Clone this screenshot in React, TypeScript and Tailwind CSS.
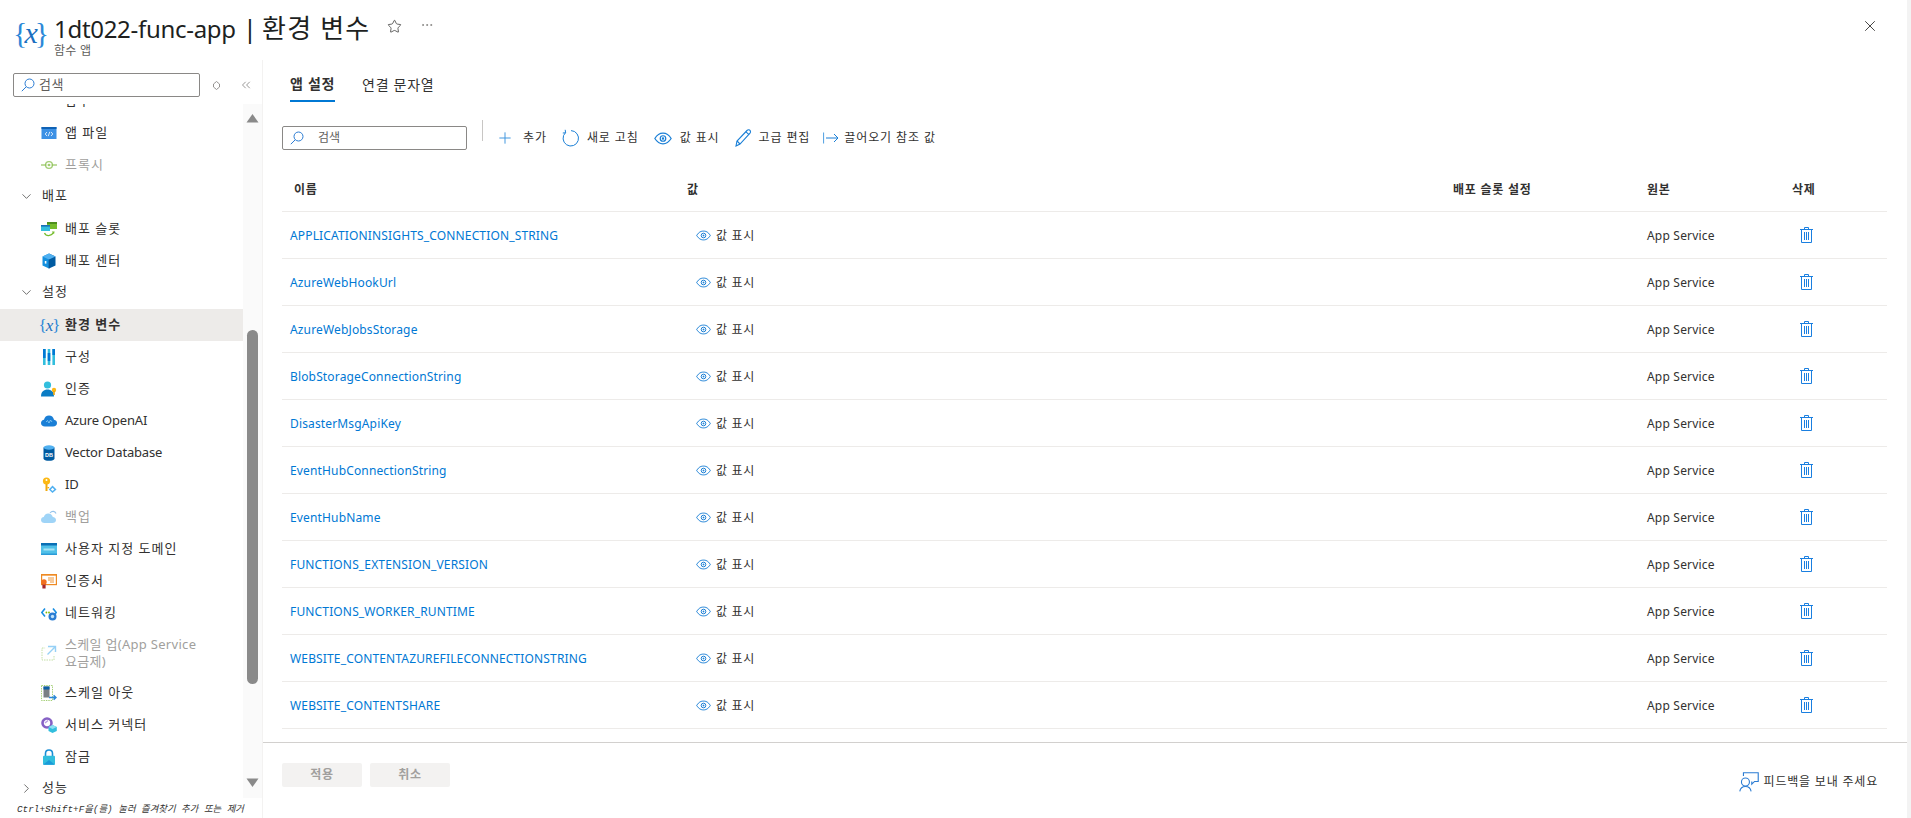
import React from 'react';
import { Plus, Star, X, ChevronDown, ChevronRight, ChevronsLeft, MoreHorizontal } from 'lucide-react';

const FONT = 'font-["Noto_Sans","Noto_Sans_CJK_KR",sans-serif]';

const SearchIcon = () => (
  <svg width="14" height="14" viewBox="0 0 14 14" fill="none" stroke="#2b7cd3" strokeWidth="1">
    <circle cx="8.5" cy="5.5" r="4.5" />
    <path d="M5.2 8.8 L0.8 13.2" />
  </svg>
);

const EyeIcon = ({ size = 15 }: { size?: number }) => (
  <svg width={size} height={Math.round(size * 0.7)} viewBox="0 0 15 10" fill="none" stroke="#1a7fd6" strokeWidth="1">
    <path d="M0.7 5 C3 1.2 5.2 0.6 7.5 0.6 C9.8 0.6 12 1.2 14.3 5 C12 8.6 9.8 9.4 7.5 9.4 C5.2 9.4 3 8.6 0.7 5 Z" />
    <circle cx="7.5" cy="5" r="2.3" />
    <circle cx="7.5" cy="5" r="0.5" fill="#1a7fd6" />
  </svg>
);

const TrashIcon = () => (
  <svg width="13" height="16" viewBox="0 0 13 16" fill="none" stroke="#1a7fe0" strokeWidth="1">
    <path d="M0 2.5 H13 M4.5 2.5 V0.5 H8.5 V2.5" />
    <path d="M1.5 2.5 V15.5 H11.5 V2.5" />
    <path d="M4.5 5 V13 M6.5 5 V13 M8.5 5 V13" />
  </svg>
);

const RefreshIcon = () => (
  <svg width="17" height="18" viewBox="0 0 17 18" fill="none" stroke="#1a7fd6" strokeWidth="1">
    <path d="M9 1.6 A7.7 7.7 0 1 1 3.6 3.6" />
    <path d="M3.2 0.8 L3.6 3.8 L0.8 4" />
  </svg>
);

const PencilIcon = () => (
  <svg width="17" height="18" viewBox="0 0 17 18" fill="none" stroke="#1a7fd6" strokeWidth="1.1">
    <path d="M1 17 L2 12 L12 1.5 C13 0.5 14.5 0.6 15.2 1.6 C15.8 2.6 15.6 3.5 15 4.2 L5 15 Z" />
    <path d="M2 12 L5 15 M11 2.8 L14 5.6" />
  </svg>
);

const ReferenceIcon = () => (
  <svg width="16" height="12" viewBox="0 0 16 12" fill="none" stroke="#1a7fd6" strokeWidth="1">
    <path d="M0.5 0.5 V11.5" stroke="#5ea7e3" strokeWidth="1.2" />
    <path d="M3 6 H15 M11 2 L15 6 L11 10" />
  </svg>
);

const FeedbackIcon = () => (
  <svg width="20" height="20" viewBox="0 0 18 18" fill="none" stroke="#2b7cd3" strokeWidth="1">
    <circle cx="5.8" cy="9" r="3.6" />
    <path d="M0.7 17.5 C1.2 14.5 3 13 5.8 13 C8.6 13 10.4 14.5 10.9 17.5" />
    <path d="M4 3.5 V0.7 H17.3 V8.5 H14 L11.5 11 V8.5" />
  </svg>
);

const FuncVar = ({ small }: { small?: boolean }) => (
  <span
    className={`font-["Liberation_Serif",serif] font-normal text-[#2b88d8] leading-none whitespace-nowrap ${
      small ? 'text-[17px] tracking-[-1px]' : 'text-[30px] tracking-[-3px] -ml-[4px]'
    }`}
  >
    {'{'}
    <span className="italic text-[#1a6fc0]">x</span>
    {'}'}
  </span>
);

const box = (children: React.ReactNode, faded?: boolean) => (
  <svg width="16" height="16" viewBox="0 0 16 16" className={faded ? 'opacity-45' : ''}>
    {children}
  </svg>
);

const icons: Record<string, () => React.ReactNode> = {
  bulb: () => box(<path d="M5 0 H11 V4 C11 6 10 7 8 7.5 C6 7 5 6 5 4 Z" fill="#fcb814" />),
  file: () =>
    box(
      <>
        <rect x="0.5" y="2" width="15" height="12" fill="#3c91e5" />
        <rect x="0.5" y="2" width="15" height="2" fill="#0f62b5" />
        <path d="M6 7 L4.2 9 L6 11 M10 7 L11.8 9 L10 11 M8.8 6.8 L7.2 11.2" stroke="#fff" strokeWidth="0.8" fill="none" />
      </>,
    ),
  proxy: () =>
    box(
      <>
        <path d="M0 8 H16" stroke="#8cc152" strokeWidth="1.4" opacity="0.8" />
        <circle cx="8" cy="8" r="3.4" fill="#fff" stroke="#8cc152" strokeWidth="1.4" opacity="0.8" />
        <circle cx="8" cy="8" r="1.3" fill="#8cc152" opacity="0.8" />
      </>,
    ),
  slot: () =>
    box(
      <>
        <rect x="6" y="1" width="10" height="7" fill="#76bc2d" />
        <rect x="6" y="1" width="10" height="2" fill="#4f8f1e" />
        <rect x="0" y="4" width="9" height="6" fill="#32bedd" />
        <rect x="0" y="4" width="9" height="1.6" fill="#1a6fb5" />
        <path d="M3.5 12 C5 15.5 10 15.5 12.5 11.5" stroke="#76bc2d" strokeWidth="1.3" fill="none" />
        <path d="M10.8 10.4 L13.6 10.6 L13 13.2" fill="#76bc2d" />
      </>,
    ),
  center: () =>
    box(
      <>
        <path d="M8 0.5 L14.5 3.5 V12.5 L8 15.5 Z" fill="#005ba1" />
        <path d="M8 0.5 L1.5 3.5 V12.5 L8 15.5 Z" fill="#1490df" />
        <path d="M1.5 3.5 L8 6.5 L14.5 3.5 L8 0.5 Z" fill="#50b0f0" />
        <path d="M8 6.5 V15.5" stroke="#0a4f8a" strokeWidth="0.6" />
        <rect x="3.8" y="8" width="1.6" height="2.6" fill="#fff" />
      </>,
    ),
  config: () =>
    box(
      <>
        <rect x="2" y="0" width="2.6" height="16" fill="#32bedd" />
        <rect x="6.7" y="0" width="2.6" height="16" fill="#32bedd" />
        <rect x="11.4" y="0" width="2.6" height="16" fill="#32bedd" />
        <rect x="2" y="0" width="2.6" height="9" fill="#0078d4" />
        <rect x="6.7" y="4" width="2.6" height="8" fill="#0078d4" />
        <rect x="11.4" y="0" width="2.6" height="6" fill="#0078d4" />
      </>,
    ),
  auth: () =>
    box(
      <>
        <circle cx="6.5" cy="4" r="3.6" fill="#32bedd" />
        <path d="M0 15.5 C0 10.5 3 8.5 6.5 8.5 C10 8.5 13 10.5 13 15.5 Z" fill="#0a7cc4" />
        <circle cx="13" cy="9" r="2.2" fill="#fcb814" />
        <path d="M12.2 10 H13.8 V14 H12.2 Z" fill="#e8a50c" />
      </>,
    ),
  openai: () =>
    box(
      <>
        <path d="M4 13.5 C1.5 13.5 0 12 0 10 C0 8 1.5 6.7 3 6.7 C3.5 4 5.5 2.5 8 2.5 C10.5 2.5 12.4 4 13 6.7 C14.8 7 16 8.3 16 10 C16 12 14.5 13.5 12 13.5 Z" fill="#1a7fd6" />
        <path d="M5 9 L6.5 7.5 L8 10 L9.5 7 L11 9" stroke="#9fd8f7" strokeWidth="0.7" fill="none" />
      </>,
    ),
  db: () =>
    box(
      <>
        <path d="M2.5 2.5 V13.5 C2.5 15 5 15.8 8 15.8 C11 15.8 13.5 15 13.5 13.5 V2.5 Z" fill="#005ba1" />
        <ellipse cx="8" cy="2.5" rx="5.5" ry="2.2" fill="#50b0f0" />
        <text x="8" y="11.5" textAnchor="middle" fontSize="5.5" fontWeight="700" letterSpacing="0" fill="#fff" fontFamily="Liberation Sans">
          DB
        </text>
      </>,
    ),
  id: () =>
    box(
      <>
        <circle cx="5.5" cy="4" r="3.6" fill="#fcb814" />
        <circle cx="5.5" cy="3" r="1" fill="#fff" />
        <rect x="4.5" y="7" width="2" height="7" fill="#f2a90d" />
        <rect x="6.5" y="10" width="1.6" height="1.3" fill="#f2a90d" />
        <path d="M11.5 8.5 L15.5 12.5 L11.5 16 L7.8 12.5 Z" fill="#50b0f0" />
        <path d="M11.5 10.8 L13.3 12.5 L11.5 14 L9.8 12.5 Z" fill="#fff" />
      </>,
    ),
  backup: () =>
    box(
      <>
        <path d="M3.5 14 C1.5 14 0 12.7 0 11 C0 9.3 1.4 8.2 2.8 8.1 C3.2 6 5 4.5 7.2 4.5 C9.5 4.5 11.4 6 11.8 8.1 C13.6 8.3 15 9.4 15 11 C15 12.7 13.5 14 11.5 14 Z" fill="#50b0f0" opacity="0.55" />
        <path d="M9 4 C11 1.5 14 2 15 4.5" stroke="#2b88d8" strokeWidth="1.1" fill="none" opacity="0.5" />
      </>,
    ),
  domain: () =>
    box(
      <>
        <rect x="0" y="2" width="16" height="12" fill="#50c0e8" />
        <rect x="0" y="2" width="16" height="2.5" fill="#0a6fb5" />
        <rect x="2.5" y="7.5" width="11" height="2" fill="#a5e3f5" />
        <rect x="0" y="12.5" width="16" height="1.5" fill="#2b9bd8" />
      </>,
    ),
  cert: () =>
    box(
      <>
        <rect x="0.6" y="1.6" width="14.8" height="10" fill="#fff" stroke="#ee8a23" strokeWidth="1.2" />
        <rect x="0" y="1" width="16" height="1.6" fill="#ee8a23" />
        <path d="M7 5 H13 M7 7 H13 M9 9 H13" stroke="#ee8a23" strokeWidth="0.9" />
        <rect x="1.4" y="10" width="3.2" height="5.5" fill="#a4262c" />
        <circle cx="3" cy="9" r="2.7" fill="#f2701f" />
      </>,
    ),
  network: () =>
    box(
      <>
        <path d="M4 3.5 L0.8 7.5 L4 11.5" stroke="#1a8fe3" strokeWidth="1.6" fill="none" />
        <path d="M12 3.5 L15.2 7.5 L14 9" stroke="#1a8fe3" strokeWidth="1.6" fill="none" />
        <circle cx="5.4" cy="7.5" r="0.9" fill="#7fba00" />
        <circle cx="8" cy="7.5" r="0.9" fill="#7fba00" />
        <circle cx="11.5" cy="11.5" r="4" fill="#2b7cd3" />
        <circle cx="11.5" cy="11.5" r="1.7" fill="#bfe2fa" />
      </>,
    ),
  scaleUp: () =>
    box(
      <>
        <rect x="1" y="3" width="12" height="12" fill="#fff" stroke="#8cc152" strokeWidth="1" strokeDasharray="1.5 1" opacity="0.5" />
        <rect x="4" y="0.5" width="11" height="10" fill="#fff" opacity="0.9" />
        <path d="M9 1.5 H14.5 V7 M14 2 L6.5 9.5 M11.5 1.5 H7" stroke="#50b0f0" strokeWidth="1.4" fill="none" opacity="0.6" />
      </>,
    ),
  scaleOut: () =>
    box(
      <>
        <rect x="0.5" y="0.5" width="11" height="15" fill="#fff" stroke="#8cc152" strokeWidth="0.8" strokeDasharray="1.4 1" />
        <rect x="2.5" y="1.5" width="6" height="11" fill="#7a7f85" />
        <rect x="2.5" y="1.5" width="6" height="3" fill="#0a5fa5" />
        <path d="M8 12.5 H15 M12.6 10.4 L15 12.5 L12.6 14.6" stroke="#2b88d8" strokeWidth="1.5" fill="none" />
      </>,
    ),
  connector: () =>
    box(
      <>
        <circle cx="6" cy="6" r="4.5" fill="#fff" stroke="#8661c5" strokeWidth="2.6" />
        <path d="M4 6 L7 3.5" stroke="#b99ce0" strokeWidth="1.4" />
        <path d="M11.5 8 L15.8 10 V14 L11.5 16 L7.5 14 V10 Z" fill="#32bedd" />
        <path d="M7.5 10 L11.5 12 L15.8 10 L11.5 8 Z" fill="#8fe0f2" />
      </>,
    ),
  lock: () =>
    box(
      <>
        <path d="M4.5 7 V4.5 C4.5 2.3 6 1 8 1 C10 1 11.5 2.3 11.5 4.5 V7" stroke="#1a8fd6" strokeWidth="1.6" fill="none" />
        <rect x="2" y="6.8" width="12" height="9" rx="1" fill="#32bedd" />
        <path d="M2 15.8 L8 11 L14 15.8 Z" fill="#1a9bd8" />
      </>,
    ),
};

type NavItem = {
  label: string;
  icon?: string;
  group?: 'open' | 'closed';
  disabled?: boolean;
  selected?: boolean;
  tall?: boolean;
  latin?: boolean;
};

const navItems: NavItem[] = [
  { label: '함수', icon: 'bulb' },
  { label: '앱 파일', icon: 'file' },
  { label: '프록시', icon: 'proxy', disabled: true },
  { label: '배포', group: 'open' },
  { label: '배포 슬롯', icon: 'slot' },
  { label: '배포 센터', icon: 'center' },
  { label: '설정', group: 'open' },
  { label: '환경 변수', selected: true },
  { label: '구성', icon: 'config' },
  { label: '인증', icon: 'auth' },
  { label: 'Azure OpenAI', icon: 'openai', latin: true },
  { label: 'Vector Database', icon: 'db', latin: true },
  { label: 'ID', icon: 'id', latin: true },
  { label: '백업', icon: 'backup', disabled: true },
  { label: '사용자 지정 도메인', icon: 'domain' },
  { label: '인증서', icon: 'cert' },
  { label: '네트워킹', icon: 'network' },
  { label: '스케일 업(App Service 요금제)', icon: 'scaleUp', disabled: true, tall: true },
  { label: '스케일 아웃', icon: 'scaleOut' },
  { label: '서비스 커넥터', icon: 'connector' },
  { label: '잠금', icon: 'lock' },
  { label: '성능', group: 'closed' },
];

const settings = [
  'APPLICATIONINSIGHTS_CONNECTION_STRING',
  'AzureWebHookUrl',
  'AzureWebJobsStorage',
  'BlobStorageConnectionString',
  'DisasterMsgApiKey',
  'EventHubConnectionString',
  'EventHubName',
  'FUNCTIONS_EXTENSION_VERSION',
  'FUNCTIONS_WORKER_RUNTIME',
  'WEBSITE_CONTENTAZUREFILECONNECTIONSTRING',
  'WEBSITE_CONTENTSHARE',
];

const COLS = 'grid grid-cols-[405px_766px_194px_145px_95px]';

const SearchBox = ({ className }: { className: string }) => (
  <div className={`${className} h-[24px] border border-[#8a8886] rounded-[2px] flex items-center pl-[7px] text-[#605e5c]`}>
    <SearchIcon />
    <span>검색</span>
  </div>
);

const Sidebar = () => (
  <aside className="w-[262px] shrink-0 flex flex-col">
    <div className="h-[44px] shrink-0 flex items-start pt-[13px] pl-[13px]">
      <SearchBox className="w-[187px] gap-[4px] text-[13px] tracking-[0.5px]" />
      <div className="ml-[11px] h-[24px] w-[10px] flex items-center justify-center">
        <svg width="7" height="9" viewBox="0 0 7 9" fill="none" stroke="#8a8886" strokeWidth="0.9">
          <path d="M3.5 0.5 L6.5 3 V6 L3.5 8.5 L0.5 6 V3 Z" />
        </svg>
      </div>
      <div className="ml-[18px] h-[24px] flex items-center">
        <ChevronsLeft size={14} strokeWidth={1.1} className="text-[#605e5c]" />
      </div>
    </div>
    <div className="flex-1 flex min-h-0">
      <div className="w-[243px] overflow-hidden">
        <div className="-mt-[19px]">
          {navItems.map((item) =>
            item.group ? (
              <div key={item.label} className="h-[30px] mb-[2px] flex items-center pl-[20px] text-[13px] tracking-[1px] text-[#323130]">
                {item.group === 'open' ? (
                  <ChevronDown size={15} strokeWidth={1.1} className="text-[#323130] -ml-[1px]" />
                ) : (
                  <ChevronRight size={15} strokeWidth={1.1} className="text-[#323130] -ml-[1px]" />
                )}
                <span className="ml-[8px]">{item.label}</span>
              </div>
            ) : (
              <div
                key={item.label}
                className={`${item.tall ? 'h-[48px]' : 'h-[32px]'} flex items-center pl-[41px] text-[13px] ${
                  item.latin ? 'tracking-[-0.2px]' : 'tracking-[1px]'
                } ${item.selected ? 'bg-[#edebe9] font-bold' : ''} ${item.disabled ? 'text-[#a19f9d]' : 'text-[#323130]'}`}
              >
                <span className="w-[16px] h-[16px] shrink-0 flex items-center justify-center">
                  {item.selected ? <FuncVar small /> : icons[item.icon!]()}
                </span>
                <span className={`ml-[8px] ${item.tall ? 'w-[140px] leading-[17px] tracking-[0.3px]' : ''}`}>{item.label}</span>
              </div>
            ),
          )}
        </div>
      </div>
      <div className="w-[19px] bg-[#fafafa] flex flex-col items-center pt-[9px] mb-[4px]">
        <svg width="13" height="10" viewBox="0 0 13 10" fill="#8a8a8a">
          <path d="M6.5 1 L12.5 9.5 H0.5 Z" />
        </svg>
        <div className="w-[11px] h-[354px] mt-[207px] rounded-full bg-[#8a8a8a]" />
        <svg width="13" height="10" viewBox="0 0 13 10" fill="#8a8a8a" className="mt-[94px]">
          <path d="M6.5 9 L12.5 0.5 H0.5 Z" />
        </svg>
      </div>
    </div>
    <div className="h-[16px] shrink-0 pl-[17px] pt-[1px] font-['Liberation_Mono','Noto_Sans_CJK_KR',monospace] italic text-[9.35px] leading-[14px] whitespace-nowrap text-[#323130]">
      Ctrl+Shift+F을(를) 눌러 즐겨찾기 추가 또는 제거
    </div>
  </aside>
);

const ToolButton = ({ icon, label, className }: { icon: React.ReactNode; label: string; className: string }) => (
  <div className={`flex items-center text-[12px] tracking-[0.9px] text-[#323130] whitespace-nowrap ${className}`}>
    {icon}
    <span>{label}</span>
  </div>
);

const Main = () => (
  <main className="flex-1 min-w-0 flex flex-col border-l border-[#f3f2f1]">
    <div className="flex-1 pl-[19px] pr-[20px]">
      <div className="h-[42px] flex pl-[8px] text-[14px] tracking-[0.7px] text-[#323130]">
        <div className="h-[42px] pt-[6px] flex items-center border-b-2 border-[#0078d4] font-semibold">앱 설정</div>
        <div className="h-[42px] pt-[6px] flex items-center ml-[27px]">연결 문자열</div>
      </div>
      <div className="h-[69px] flex items-start">
        <div className="mt-[24px]">
          <SearchBox className="w-[185px] gap-[14px] text-[12px]" />
        </div>
        <div className="w-px h-[21px] bg-[#c8c6c4] mt-[18px] ml-[15px]" />
        <div className="flex items-center h-[24px] mt-[24px] ml-[13px]">
          <ToolButton className="gap-[9px]" icon={<Plus size={18} strokeWidth={1.3} className="text-[#3f95de]" />} label="추가" />
          <ToolButton className="gap-[8px] ml-[15px]" icon={<RefreshIcon />} label="새로 고침" />
          <ToolButton className="gap-[8px] ml-[15px]" icon={<EyeIcon size={18} />} label="값 표시" />
          <ToolButton className="gap-[7px] ml-[15px]" icon={<PencilIcon />} label="고급 편집" />
          <ToolButton className="gap-[5px] ml-[13px]" icon={<ReferenceIcon />} label="끌어오기 참조 값" />
        </div>
      </div>
      <div className={`${COLS} h-[41px] pb-[3px] items-center border-b border-[#edebe9] text-[12px] tracking-[0.75px] font-bold text-[#323130]`}>
        <span className="pl-[12px]">이름</span>
        <span>값</span>
        <span>배포 슬롯 설정</span>
        <span>원본</span>
        <span>삭제</span>
      </div>
      {settings.map((name) => (
        <div key={name} className={`${COLS} h-[47px] items-center border-b border-[#edebe9] text-[12px] text-[#323130]`}>
          <span className="pl-[8px] pt-[1px] text-[#0078d4] tracking-[0.15px] whitespace-nowrap">{name}</span>
          <span className="pl-[9px] flex items-center gap-[5px] tracking-[0.7px]">
            <EyeIcon />
            <span className="pt-[2px]">값 표시</span>
          </span>
          <span />
          <span className="pt-[1px] tracking-[0.2px]">App Service</span>
          <span className="pl-[8px]">
            <TrashIcon />
          </span>
        </div>
      ))}
    </div>
    <div className="h-[76px] shrink-0 border-t border-[#d2d0ce] flex items-start justify-between pl-[19px] pr-[29px]">
      <div className="flex gap-[8px] mt-[20px]">
        <div className="w-[80px] h-[24px] rounded-[2px] bg-[#f3f2f1] flex items-center justify-center text-[12px] tracking-[0.6px] font-semibold text-[#a19f9d]">적용</div>
        <div className="w-[80px] h-[24px] rounded-[2px] bg-[#f3f2f1] flex items-center justify-center text-[12px] tracking-[0.6px] font-semibold text-[#a19f9d]">취소</div>
      </div>
      <div className="flex items-center gap-[5px] mt-[29px] text-[12px] tracking-[0.8px] text-[#323130]">
        <FeedbackIcon />
        <span>피드백을 보내 주세요</span>
      </div>
    </div>
  </main>
);

export default function App() {
  return (
    <div className={`${FONT} h-screen w-full bg-white flex flex-col overflow-hidden border-r-4 border-[#f3f3f3]`}>
      <header className="h-[60px] shrink-0 flex items-start pl-[17px] pr-[28px]">
        <div className="w-[32px] h-[32px] mt-[17px] flex items-center">
          <FuncVar />
        </div>
        <div className="ml-[5px] mt-[9px]">
          <div className="text-[24px] leading-[38px] text-[#201f1e] whitespace-nowrap flex items-baseline">
            <span className="tracking-[-0.3px]">1dt022-func-app</span>
            <span className="text-[26px] ml-[7px]">|</span>
            <span className="text-[26px] tracking-[1.2px] ml-[5px]">환경 변수</span>
          </div>
          <div className="text-[12px] leading-[14px] tracking-[0.3px] text-[#605e5c] -mt-[4px]">함수 앱</div>
        </div>
        <Star size={15} strokeWidth={1.2} className="ml-[16px] mt-[19px] text-[#323130]" />
        <MoreHorizontal size={14} strokeWidth={1} className="ml-[18px] mt-[18px] text-[#605e5c]" />
        <X size={18} strokeWidth={1.2} className="ml-auto mt-[17px] text-[#323130]" />
      </header>
      <div className="flex-1 flex min-h-0">
        <Sidebar />
        <Main />
      </div>
    </div>
  );
}
